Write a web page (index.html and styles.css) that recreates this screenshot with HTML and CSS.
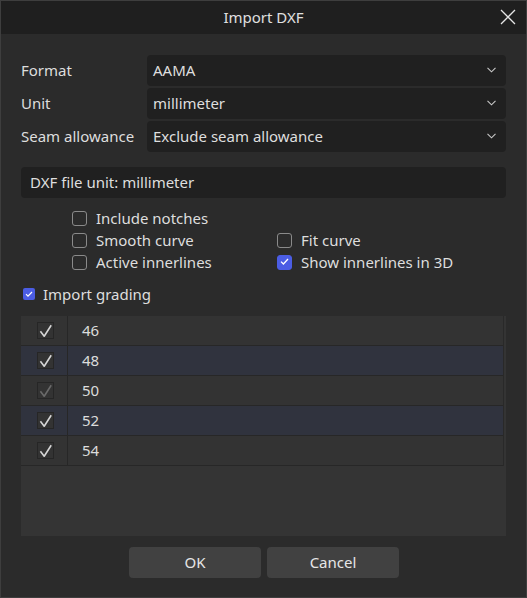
FILE: index.html
```html
<!DOCTYPE html>
<html>
<head>
<meta charset="utf-8">
<title>Import DXF</title>
<link rel="stylesheet" href="styles.css">
</head>
<body>
<div class="window">
  <div class="titlebar">
    <span class="title">Import DXF</span>
    <span class="close">
      <svg width="16" height="16" viewBox="0 0 16 16"><path d="M1 1 L15 15 M15 1 L1 15" stroke="#e6e6e6" stroke-width="1.3" fill="none"/></svg>
    </span>
  </div>
  <div class="content">
    <div class="form">
      <div class="form-row">
        <span class="form-label">Format</span>
        <div class="combo"><span>AAMA</span><svg class="chev" width="9" height="6" viewBox="0 0 9 6"><path d="M0.5 0.8 L4.5 4.8 L8.5 0.8" stroke="#c8c8c8" stroke-width="1.1" fill="none"/></svg></div>
      </div>
      <div class="form-row">
        <span class="form-label">Unit</span>
        <div class="combo"><span>millimeter</span><svg class="chev" width="9" height="6" viewBox="0 0 9 6"><path d="M0.5 0.8 L4.5 4.8 L8.5 0.8" stroke="#c8c8c8" stroke-width="1.1" fill="none"/></svg></div>
      </div>
      <div class="form-row">
        <span class="form-label">Seam allowance</span>
        <div class="combo"><span>Exclude seam allowance</span><svg class="chev" width="9" height="6" viewBox="0 0 9 6"><path d="M0.5 0.8 L4.5 4.8 L8.5 0.8" stroke="#c8c8c8" stroke-width="1.1" fill="none"/></svg></div>
      </div>
    </div>

    <div class="info-box">DXF file unit: millimeter</div>

    <div class="options">
      <label class="opt"><span class="cb"></span>Include notches</label>
      <span></span>
      <label class="opt"><span class="cb"></span>Smooth curve</label>
      <label class="opt"><span class="cb"></span>Fit curve</label>
      <label class="opt"><span class="cb"></span>Active innerlines</label>
      <label class="opt"><span class="cb cb-on"><svg width="15" height="15" viewBox="0 0 15 15"><path d="M4 7.6 L6.4 10 L11 5" stroke="#ffffff" stroke-width="1.3" fill="none"/></svg></span>Show innerlines in 3D</label>
    </div>

    <label class="grading"><span class="cb-small"><svg width="12" height="12" viewBox="0 0 12 12"><path d="M3 6.2 L5 8.2 L9 4" stroke="#ffffff" stroke-width="1.2" fill="none"/></svg></span>Import grading</label>

    <div class="table">
      <div class="rows">
        <div class="row"><div class="cell-check"><span class="tcb"><svg width="17" height="17" viewBox="0 0 17 17"><path d="M3.4 9.2 L7.2 14.2 L14.2 3.2" stroke="#d6d6d6" stroke-width="1.6" fill="none" stroke-linejoin="round"/></svg></span></div><div class="cell-text">46</div></div>
        <div class="row sel"><div class="cell-check"><span class="tcb"><svg width="17" height="17" viewBox="0 0 17 17"><path d="M3.4 9.2 L7.2 14.2 L14.2 3.2" stroke="#d6d6d6" stroke-width="1.6" fill="none" stroke-linejoin="round"/></svg></span></div><div class="cell-text">48</div></div>
        <div class="row"><div class="cell-check"><span class="tcb"><svg width="17" height="17" viewBox="0 0 17 17"><path d="M3.4 9.2 L7.2 14.2 L14.2 3.2" stroke="#6a6a6a" stroke-width="1.6" fill="none" stroke-linejoin="round"/></svg></span></div><div class="cell-text">50</div></div>
        <div class="row sel"><div class="cell-check"><span class="tcb"><svg width="17" height="17" viewBox="0 0 17 17"><path d="M3.4 9.2 L7.2 14.2 L14.2 3.2" stroke="#d6d6d6" stroke-width="1.6" fill="none" stroke-linejoin="round"/></svg></span></div><div class="cell-text">52</div></div>
        <div class="row"><div class="cell-check"><span class="tcb"><svg width="17" height="17" viewBox="0 0 17 17"><path d="M3.4 9.2 L7.2 14.2 L14.2 3.2" stroke="#d6d6d6" stroke-width="1.6" fill="none" stroke-linejoin="round"/></svg></span></div><div class="cell-text">54</div></div>
      </div>
    </div>

    <div class="buttons">
      <button class="btn">OK</button>
      <button class="btn">Cancel</button>
    </div>
  </div>
</div>
</body>
</html>
```

FILE: styles.css
```css
* { box-sizing: border-box; }

html, body {
  margin: 0;
  padding: 0;
  background: #2b2b2b;
}

body {
  font-family: "Noto Sans", "Open Sans", sans-serif;
  font-size: 15px;
  color: #dedede;
}

.window {
  width: 527px;
  height: 598px;
  border: 1px solid #3e3e3e;
  background: #2b2b2b;
  display: flex;
  flex-direction: column;
}

.titlebar {
  height: 33px;
  background: #1f1f1f;
  display: flex;
  align-items: center;
  justify-content: center;
  position: relative;
  padding-bottom: 1px;
}

.title {
  font-size: 15px;
  color: #e0e0e0;
}

.close {
  position: absolute;
  right: 10px;
  top: 8px;
  width: 16px;
  height: 16px;
  display: flex;
}

.content {
  padding: 21px 20px 0 20px;
  display: flex;
  flex-direction: column;
}

.form {
  display: flex;
  flex-direction: column;
  gap: 2px;
}

.form-row {
  display: flex;
  align-items: center;
  height: 31px;
}

.form-label {
  width: 126px;
  flex: none;
  padding-bottom: 2px;
}

.combo {
  flex: 1;
  height: 31px;
  background: #202020;
  border-radius: 4px;
  display: flex;
  align-items: center;
  justify-content: space-between;
  padding: 0 10px 2px 6px;
}

.chev { display: block; margin-top: 1px; }

.info-box {
  margin-top: 15px;
  height: 31px;
  background: #202020;
  border-radius: 4px;
  display: flex;
  align-items: center;
  padding: 0 0 2px 9px;
}

.options {
  margin-top: 9px;
  padding-left: 51px;
  display: grid;
  grid-template-columns: 205px auto;
  grid-auto-rows: 22px;
}

.opt {
  display: flex;
  align-items: center;
}

.cb {
  width: 15px;
  height: 15px;
  border: 1.5px solid #8a8a8a;
  border-radius: 3px;
  margin-right: 9px;
  flex: none;
  display: flex;
}

.cb-on {
  background: #4b5de4;
  border-color: #4b5de4;
}

.cb-on svg { margin: -1.5px; }

.grading {
  margin-top: 10px;
  height: 22px;
  display: flex;
  align-items: center;
  padding-left: 2px;
}

.cb-small {
  width: 12px;
  height: 12px;
  background: #4b5de4;
  border-radius: 2px;
  margin-right: 8px;
  display: flex;
}

.table {
  margin-top: 11px;
  height: 220px;
  background: #343434;
}

.rows {
  width: calc(100% - 2px);
  border-right: 1px solid #292929;
}

.row {
  height: 30px;
  display: flex;
  background: #333333;
  border-bottom: 1px solid #272727;
}

.row.sel {
  background: #30333e;
}

.cell-check {
  width: 47px;
  border-right: 1px solid #272727;
  display: flex;
  align-items: center;
  justify-content: center;
  padding-left: 2px;
}

.tcb {
  width: 17px;
  height: 17px;
  border: 1px solid #262626;
  background: #333333;
  display: flex;
}

.tcb svg { margin: -1px; }

.cell-text {
  padding: 0 0 1px 14px;
  display: flex;
  align-items: center;
  color: #dcdcdc;
}

.buttons {
  margin-top: 11px;
  display: flex;
  justify-content: center;
  gap: 6px;
  padding-left: 1px;
}

.btn {
  width: 132px;
  height: 31px;
  background: #414141;
  border: none;
  border-radius: 4px;
  color: #e6e6e6;
  font-family: "Noto Sans", "Open Sans", sans-serif;
  font-size: 15px;
  padding: 0 0 2px 0;
}
```
